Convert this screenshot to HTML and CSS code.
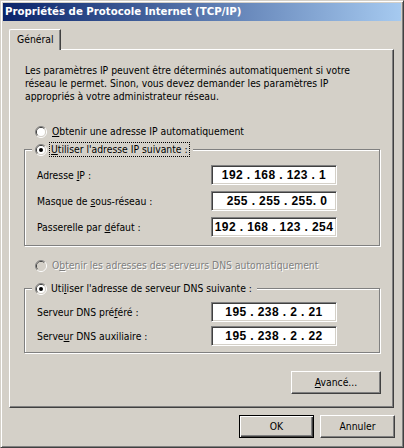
FILE: index.html
```html
<!DOCTYPE html>
<html lang="fr">
<head>
    <meta charset="UTF-8">
    <meta name="viewport" content="width=device-width, initial-scale=1.0">
    <title>Propriétés de Protocole Internet (TCP/IP)</title>
    <link rel="stylesheet" href="styles.css">
</head>
<body>
    <div class="window">
        <div class="titlebar">Propriétés de Protocole Internet (TCP/IP)</div>

        <div class="client">
            <div class="tabs">
                <div class="tab">Général</div>
            </div>

            <div class="panel">
                <p class="intro">Les paramètres IP peuvent être déterminés automatiquement si votre<br>réseau le permet. Sinon, vous devez demander les paramètres IP<br>appropriés à votre administrateur réseau.</p>

                <div class="option option-first">
                    <svg class="radio" width="12" height="12" viewBox="0 0 12 12">
                        <path d="M2.1 9.9A5.5 5.5 0 0 1 9.9 2.1" stroke="#808080" fill="none"/>
                        <path d="M9.9 2.1A5.5 5.5 0 0 1 2.1 9.9" stroke="#fff" fill="none"/>
                        <path d="M2.8 9.2A4.5 4.5 0 0 1 9.2 2.8" stroke="#404040" fill="none"/>
                        <path d="M9.2 2.8A4.5 4.5 0 0 1 2.8 9.2" stroke="#d4d0c8" fill="none"/>
                        <circle cx="6" cy="6" r="4" fill="#fff"/>
                    </svg>
                    <span><u>O</u>btenir une adresse IP automatiquement</span>
                </div>

                <div class="group group-ip">
                    <div class="group-title">
                        <svg class="radio" width="12" height="12" viewBox="0 0 12 12">
                            <path d="M2.1 9.9A5.5 5.5 0 0 1 9.9 2.1" stroke="#808080" fill="none"/>
                            <path d="M9.9 2.1A5.5 5.5 0 0 1 2.1 9.9" stroke="#fff" fill="none"/>
                            <path d="M2.8 9.2A4.5 4.5 0 0 1 9.2 2.8" stroke="#404040" fill="none"/>
                            <path d="M9.2 2.8A4.5 4.5 0 0 1 2.8 9.2" stroke="#d4d0c8" fill="none"/>
                            <circle cx="6" cy="6" r="4" fill="#fff"/>
                            <circle cx="6" cy="6" r="2" fill="#000"/>
                        </svg>
                        <span class="focus"><u>U</u>tiliser l'adresse IP suivante :</span>
                    </div>
                    <div class="fields">
                        <span>Adresse <u>I</u>P :</span>
                        <span class="ip">192 . 168 . 123 . 1</span>
                        <span>Masque de <u>s</u>ous-réseau :</span>
                        <span class="ip ip-mask">255 . 255 . 255. 0</span>
                        <span>Passerelle par <u>d</u>éfaut :</span>
                        <span class="ip">192 . 168 . 123 . 254</span>
                    </div>
                </div>

                <div class="option option-disabled">
                    <svg class="radio" width="12" height="12" viewBox="0 0 12 12">
                        <path d="M2.1 9.9A5.5 5.5 0 0 1 9.9 2.1" stroke="#808080" fill="none"/>
                        <path d="M9.9 2.1A5.5 5.5 0 0 1 2.1 9.9" stroke="#fff" fill="none"/>
                        <path d="M2.8 9.2A4.5 4.5 0 0 1 9.2 2.8" stroke="#404040" fill="none"/>
                        <path d="M9.2 2.8A4.5 4.5 0 0 1 2.8 9.2" stroke="#d4d0c8" fill="none"/>
                        <circle cx="6" cy="6" r="4" fill="#d4d0c8"/>
                    </svg>
                    <span>O<u>b</u>tenir les adresses des serveurs DNS automatiquement</span>
                </div>

                <div class="group group-dns">
                    <div class="group-title">
                        <svg class="radio" width="12" height="12" viewBox="0 0 12 12">
                            <path d="M2.1 9.9A5.5 5.5 0 0 1 9.9 2.1" stroke="#808080" fill="none"/>
                            <path d="M9.9 2.1A5.5 5.5 0 0 1 2.1 9.9" stroke="#fff" fill="none"/>
                            <path d="M2.8 9.2A4.5 4.5 0 0 1 9.2 2.8" stroke="#404040" fill="none"/>
                            <path d="M9.2 2.8A4.5 4.5 0 0 1 2.8 9.2" stroke="#d4d0c8" fill="none"/>
                            <circle cx="6" cy="6" r="4" fill="#fff"/>
                            <circle cx="6" cy="6" r="2" fill="#000"/>
                        </svg>
                        <span class="nofocus">Uti<u>l</u>iser l'adresse de serveur DNS suivante :</span>
                    </div>
                    <div class="fields">
                        <span>Serveur DNS pré<u>f</u>éré :</span>
                        <span class="ip">195 . 238 . 2 . 21</span>
                        <span>Serve<u>u</u>r DNS auxiliaire :</span>
                        <span class="ip">195 . 238 . 2 . 22</span>
                    </div>
                </div>

                <div class="panel-actions">
                    <button class="btn btn-advanced"><u>A</u>vancé...</button>
                </div>
            </div>

            <div class="dialog-actions">
                <button class="btn btn-default">OK</button>
                <button class="btn">Annuler</button>
            </div>
        </div>
    </div>
</body>
</html>
```

FILE: styles.css
```css
* {
    box-sizing: border-box;
}

body {
    margin: 0;
    background-color: #d4d0c8;
    color: #000;
    font-family: "DejaVu Sans", Verdana, sans-serif;
    font-stretch: condensed;
    font-size: 10.3px;
    line-height: 13px;
}

/* window frame */
.window {
    width: 404px;
    height: 448px;
    padding: 2px;
    border: 1px solid;
    border-color: #d4d0c8 #404040 #404040 #d4d0c8;
    box-shadow: inset 1px 1px #fff, inset -1px -1px #808080;
}

.titlebar {
    height: 18px;
    padding-left: 2px;
    background: linear-gradient(to right, #0a246a, #a6caf0);
    color: #fff;
    font-stretch: normal;
    font-size: 10.2px;
    font-weight: bold;
    line-height: 18px;
    white-space: nowrap;
}

.client {
    padding: 8px 7px 0 6px;
}

/* tab strip */
.tabs {
    display: flex;
    height: 20px;
}

.tab {
    position: relative;
    z-index: 1;
    width: 52px;
    height: 21px;
    padding-left: 7px;
    background: #d4d0c8;
    border-top: 1px solid #fff;
    border-left: 1px solid #fff;
    border-right: 1px solid #404040;
    border-top-left-radius: 2px;
    box-shadow: inset -1px 0 #808080;
    line-height: 19px;
}

.panel {
    padding: 14px 13px 13px 14px;
    border: 1px solid;
    border-color: #fff #404040 #404040 #fff;
    box-shadow: inset -1px -1px #808080;
}

.intro {
    margin: 0 0 0 1px;
    white-space: nowrap;
}

/* radio rows */
.option {
    display: flex;
    align-items: center;
    gap: 5px;
    height: 13px;
    padding-left: 11px;
    white-space: nowrap;
}

.option-first {
    margin-top: 22px;
}

.option-disabled {
    margin-top: 13px;
    color: #808080;
    text-shadow: 1px 1px #fff;
}

.radio {
    flex: none;
    display: block;
}

/* group boxes */
.group {
    border: 1px solid #808080;
    box-shadow: 1px 1px #fff, inset 1px 1px #fff;
    padding-left: 12px;
}

.group-ip {
    margin-top: 11px;
    padding-bottom: 8px;
}

.group-dns {
    margin-top: 16px;
    padding-bottom: 6px;
}

.group-title {
    display: flex;
    align-items: center;
    gap: 2px;
    width: max-content;
    height: 15px;
    margin: -8px 0 0 -5px;
    padding: 0 3px;
    background: #d4d0c8;
    white-space: nowrap;
}

.focus {
    padding: 0 1px;
    border: 1px dotted #000;
}

.nofocus {
    padding: 0 1px;
    border: 1px solid transparent;
}

.fields {
    display: grid;
    grid-template-columns: 174px 126px;
    align-items: center;
    white-space: nowrap;
}

.group-ip .fields {
    margin-top: 8px;
    row-gap: 6px;
}

.group-dns .fields {
    margin-top: 6px;
    row-gap: 4px;
}

.ip {
    height: 20px;
    background: #fff;
    border: 1px solid;
    border-color: #808080 #fff #fff #808080;
    box-shadow: inset 1px 1px #404040, inset -1px -1px #d4d0c8;
    font-family: "Liberation Sans", Arial, sans-serif;
    font-stretch: normal;
    font-size: 12px;
    font-weight: bold;
    line-height: 18px;
    letter-spacing: 0.4px;
    text-align: center;
}

.ip-mask {
    padding-left: 6px;
}

/* buttons */
.btn {
    width: 75px;
    height: 23px;
    padding: 0;
    background: #d4d0c8;
    border: 1px solid;
    border-color: #fff #404040 #404040 #fff;
    box-shadow: inset -1px -1px #808080;
    color: #000;
    font: inherit;
}

.btn-default {
    border: 1px solid #000;
    box-shadow: inset 1px 1px #fff, inset -1px -1px #404040, inset -2px -2px #808080;
}

.btn-advanced {
    width: 90px;
}

.panel-actions {
    display: flex;
    justify-content: flex-end;
    margin: 18px -1px 0 0;
}

.dialog-actions {
    display: flex;
    justify-content: flex-end;
    gap: 6px;
    margin: 7px -1px 0 0;
}
```
